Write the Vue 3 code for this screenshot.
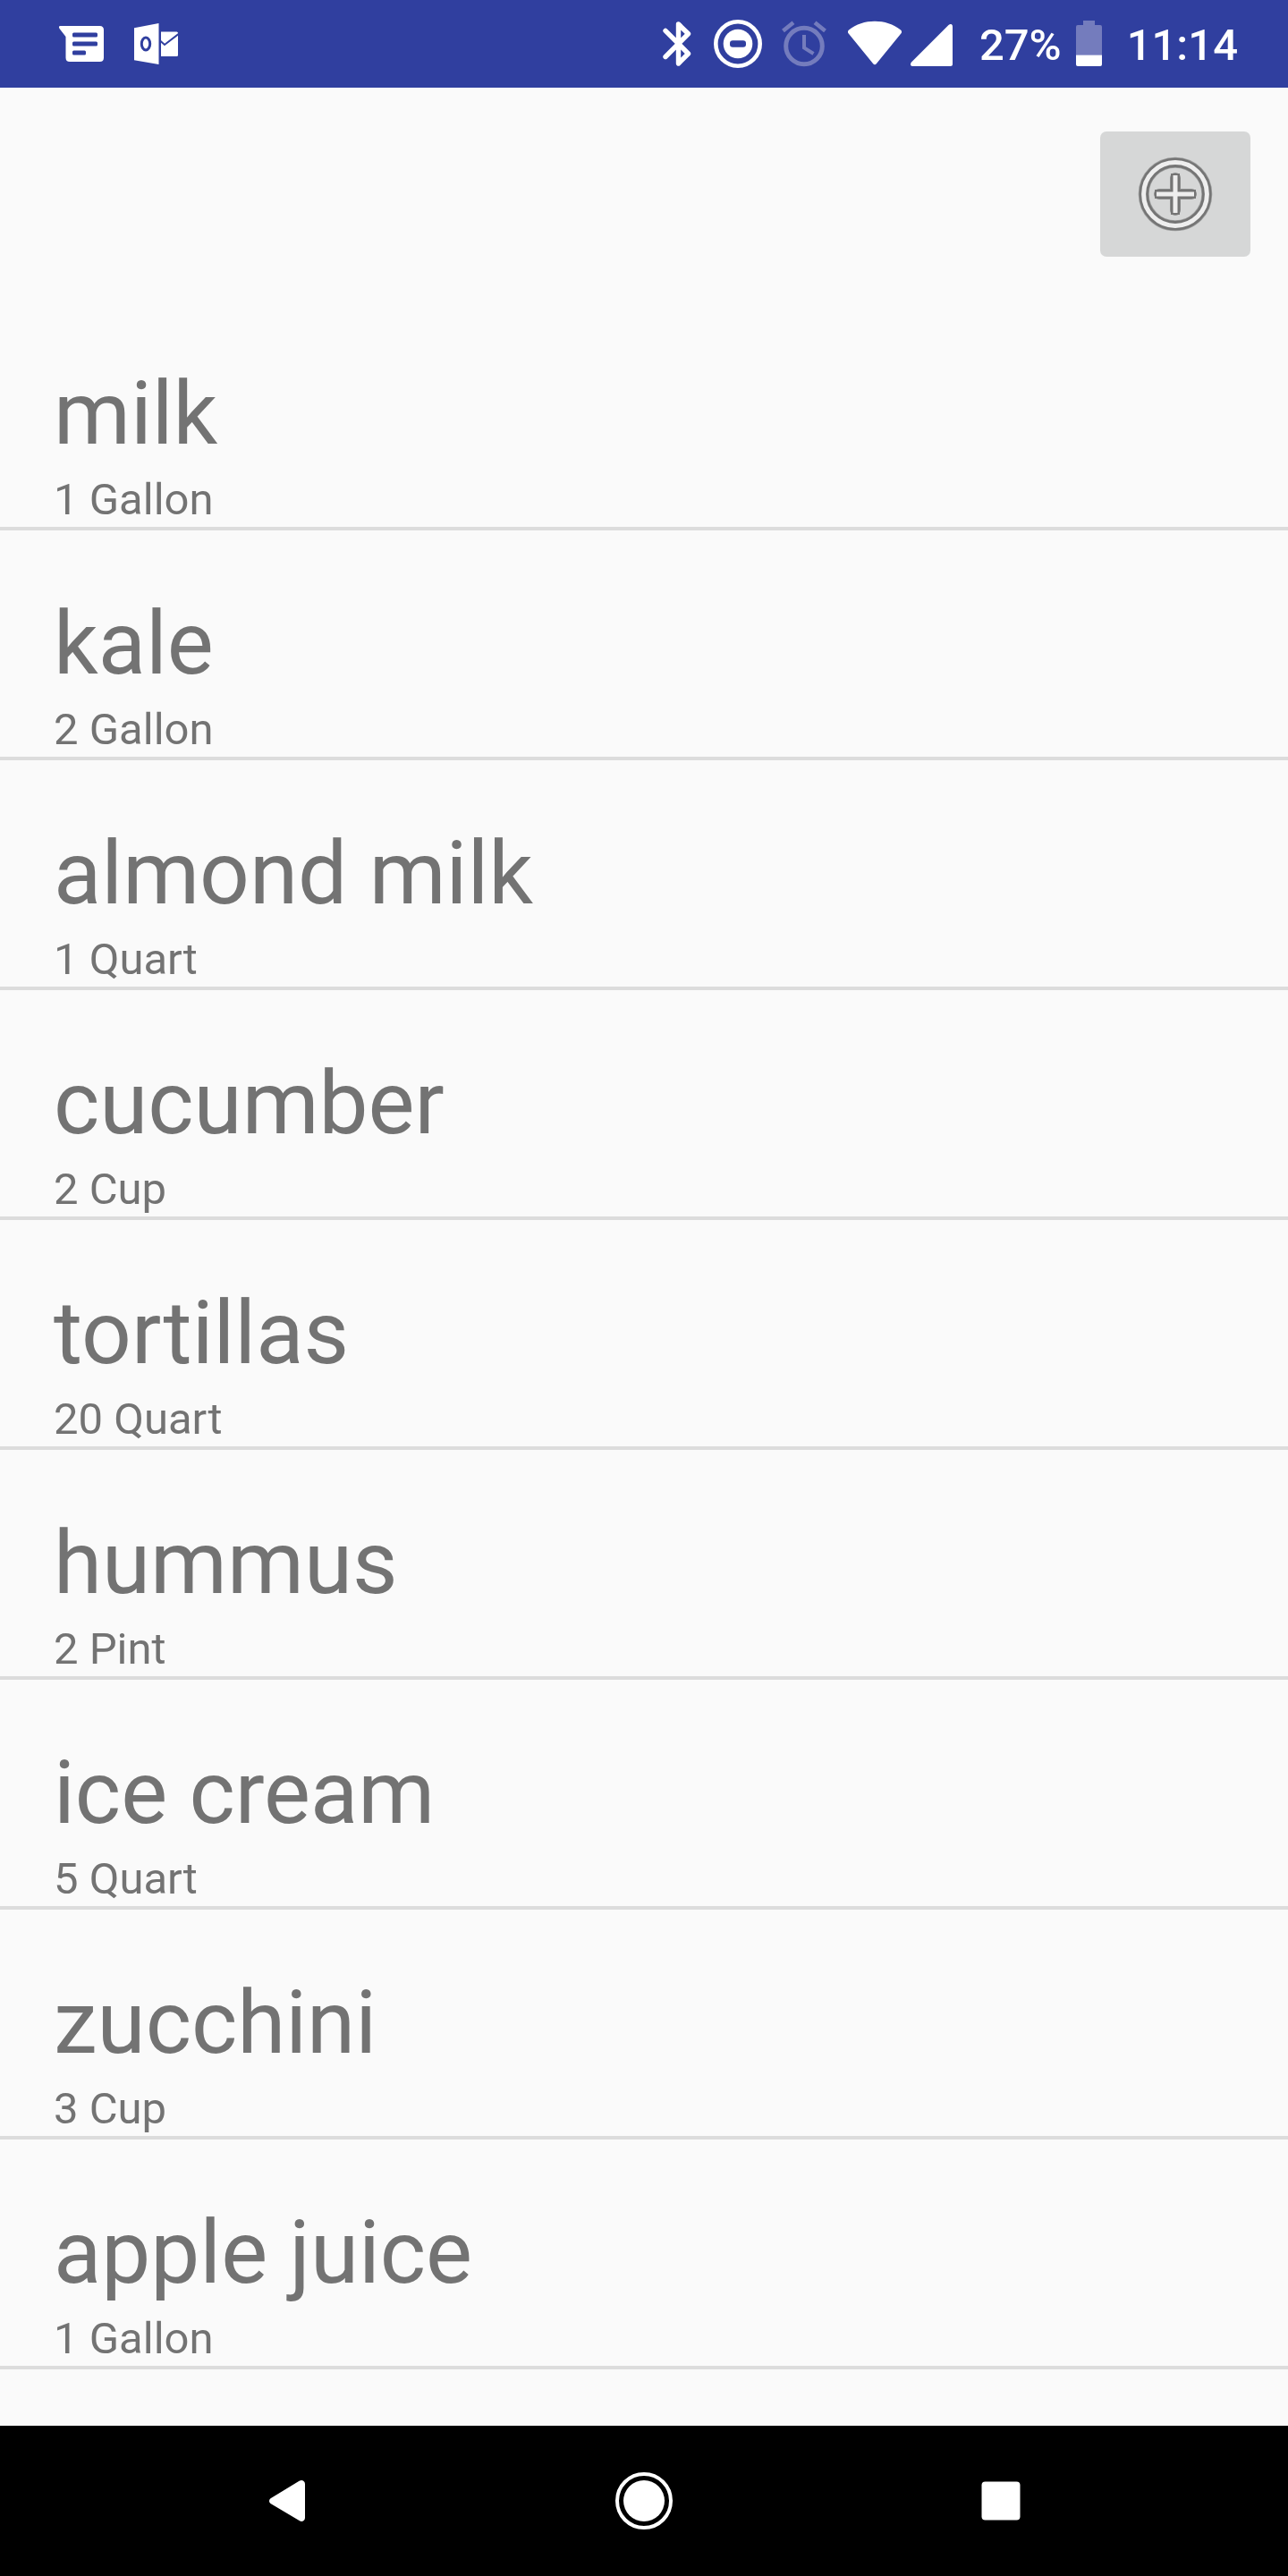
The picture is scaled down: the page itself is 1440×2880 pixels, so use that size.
<script setup>
import { ref } from 'vue'

const items = ref([
  { name: 'milk', amount: '1 Gallon' },
  { name: 'kale', amount: '2 Gallon' },
  { name: 'almond milk', amount: '1 Quart' },
  { name: 'cucumber', amount: '2 Cup' },
  { name: 'tortillas', amount: '20 Quart' },
  { name: 'hummus', amount: '2 Pint' },
  { name: 'ice cream', amount: '5 Quart' },
  { name: 'zucchini', amount: '3 Cup' },
  { name: 'apple juice', amount: '1 Gallon' }
])
</script>

<template>
  <div class="screen">
    <header class="status-bar">
      <div class="notifications">
        <!-- Messages -->
        <svg width="50" height="56" viewBox="0 0 50 56" aria-hidden="true">
          <path fill="#fff" d="M1.500 8H45.500Q50 8 50 12.500V43.500Q50 48 45.500 48H12Q7.500 48 7.500 43.500V20L.5 11Q-1 8 1.500 8Z" />
          <g class="cutout">
            <rect x="15" y="15.500" width="28" height="5" rx="1.500" />
            <rect x="15" y="25.500" width="28" height="5" rx="1.500" />
            <rect x="15" y="35.500" width="15" height="5" rx="1.500" />
          </g>
        </svg>
        <!-- Outlook -->
        <svg width="50" height="56" viewBox="0 0 50 56" aria-hidden="true">
          <path fill="#fff" d="M0 10.300 27.500 5V51L0 46.200Z" />
          <path fill="#fff" d="M30 14.500H47.500Q49 14.500 49 16V40.500Q49 42 47.500 42H30Z" />
          <path fill="none" stroke="#303f9f" stroke-width="2" d="M29 24.500 34 29 49.500 17" />
          <ellipse cx="13" cy="28" rx="4.700" ry="6.900" fill="none" stroke="#303f9f" stroke-width="3" />
        </svg>
      </div>
      <div class="system">
        <!-- Bluetooth -->
        <svg class="bluetooth" width="32" height="56" viewBox="0 0 32 56" aria-hidden="true">
          <path fill="none" stroke="#fff" stroke-width="5.400" stroke-linecap="round" stroke-linejoin="round" d="M3 13.300 28.500 39 17.500 50V6L28.500 16.800 3 42.500" />
        </svg>
        <!-- Do not disturb -->
        <svg class="dnd" width="54" height="56" viewBox="0 0 54 56" aria-hidden="true">
          <circle cx="27" cy="28" r="24.700" fill="none" stroke="#fff" stroke-width="4.600" />
          <circle cx="27" cy="28" r="16.300" fill="#fff" />
          <rect class="cutout" x="18" y="24.300" width="18" height="7.400" rx="3.200" />
        </svg>
        <!-- Alarm -->
        <svg class="alarm" width="50" height="56" viewBox="0 0 50 56" aria-hidden="true">
          <g class="dim-line">
            <circle cx="25" cy="30.500" r="20.300" stroke-width="5" />
            <path stroke-width="4" d="M25 18V32.500L35.500 39" />
            <path stroke-width="4.600" d="M1.500 13.500 13 4.300M37 4.300 48.500 13.500" />
          </g>
        </svg>
        <!-- Wi-Fi -->
        <svg class="wifi" width="60" height="56" viewBox="0 0 60 56" aria-hidden="true">
          <path fill="#fff" d="M1 12.500C17-.5 43-.5 59 12.500Q61 14.200 59.300 16.500L32 50Q30 52.500 28 50L.7 16.500Q-1 14.200 1 12.500Z" />
        </svg>
        <!-- Cellular -->
        <svg class="signal" width="47" height="56" viewBox="0 0 47 56" aria-hidden="true">
          <path fill="#fff" d="M42.500 7Q44 5.600 45.500 6Q47 6.500 47 8.500V50.500Q47 53 44.500 53H2.500Q.5 53 0 51.500Q-.3 50 1 48.500Z" />
        </svg>
        <span class="battery-level">27%</span>
        <!-- Battery -->
        <svg class="battery" width="29" height="56" viewBox="0 0 29 56" aria-hidden="true">
          <path fill="#747cbd" d="M8 2H21V7H27Q29 7 29 9V40.500H0V9Q0 7 2 7H8Z" />
          <path fill="#fff" d="M0 40.500H29V51Q29 53 27 53H2Q0 53 0 51Z" />
        </svg>
        <time class="clock">11:14</time>
      </div>
    </header>

    <main class="content">
      <div class="toolbar">
        <button class="add" type="button" aria-label="Add item">
          <svg width="84" height="84" viewBox="0 0 84 84" aria-hidden="true">
            <g fill="none">
              <circle cx="42" cy="42" r="35.300" stroke="#9b9c9c" stroke-width="12" />
              <circle cx="42" cy="42" r="35.300" stroke="#757575" stroke-width="10.400" />
              <circle cx="42" cy="42" r="35.400" stroke="#eee" stroke-width="5" />
              <path stroke="#8a8b8b" stroke-width="12" stroke-linecap="round" d="M42 24V60M24 42H60" />
              <path stroke="#757575" stroke-width="10" d="M42 19V65M19 42H65" />
              <path stroke="#eee" stroke-width="5" d="M42 21V63M21 42H63" />
            </g>
          </svg>
        </button>
      </div>
      <ul class="list">
        <li v-for="item in items" :key="item.name" class="item">
          <span class="name">{{ item.name }}</span>
          <span class="amount">{{ item.amount }}</span>
        </li>
      </ul>
    </main>

    <nav class="nav-bar" aria-label="System navigation">
      <button type="button" aria-label="Back">
        <svg width="84" height="84" viewBox="0 0 84 84" aria-hidden="true">
          <path fill="#fff" d="M23.500 39.300 55.500 19.800Q58 18.500 60 19.500Q62 20.500 62 23V61Q62 63.500 60 64.500Q58 65.500 55.500 64L23.500 45Q20.500 42.200 23.500 39.300Z" />
        </svg>
      </button>
      <button type="button" aria-label="Home">
        <svg width="84" height="84" viewBox="0 0 84 84" aria-hidden="true">
          <circle cx="42" cy="42" r="30" fill="none" stroke="#fff" stroke-width="4" />
          <circle cx="42" cy="42" r="23" fill="#fff" />
        </svg>
      </button>
      <button type="button" aria-label="Recent apps">
        <svg width="84" height="84" viewBox="0 0 84 84" aria-hidden="true">
          <rect x="20.500" y="20.500" width="43" height="43" rx="4" fill="#fff" />
        </svg>
      </button>
    </nav>
  </div>
</template>

<style>
body {
  margin: 0;
  background: #fafafa;
}
</style>

<style scoped>
.screen {
  display: flex;
  flex-direction: column;
  min-height: 100vh;
  background: #fafafa;
  color: #737373;
  font-family: Roboto, sans-serif;
}

svg {
  display: block;
  flex: none;
}

button {
  display: flex;
  align-items: center;
  justify-content: center;
  padding: 0;
  border: 0;
  cursor: pointer;
}

.status-bar {
  display: flex;
  align-items: center;
  justify-content: space-between;
  height: 98px;
  padding: 0 56px 0 66px;
  background: #303f9f;
  color: #fff;
  font-size: 49px;
  font-weight: 500;
  line-height: 58px;
}

.notifications {
  display: flex;
  gap: 34px;
}

.system {
  display: flex;
  align-items: center;
}

.cutout {
  fill: #303f9f;
}

.dim-line {
  fill: none;
  stroke: #747cbd;
}

.dnd {
  margin-left: 25px;
}

.alarm {
  margin-left: 22px;
}

.wifi {
  margin-left: 24px;
}

.signal {
  margin-left: 10px;
}

.battery-level,
.clock {
  padding-top: 4px;
}

.battery-level {
  margin-left: 30px;
}

.battery {
  margin-left: 16px;
}

.clock {
  margin-left: 28px;
}

.content {
  flex: 1;
}

.toolbar {
  display: flex;
  justify-content: flex-end;
  padding: 49px 42px;
}

.add {
  width: 168px;
  height: 140px;
  border-radius: 7px;
  background: #d6d7d7;
}

.list {
  margin: 0;
  padding: 0;
  list-style: none;
}

.item {
  display: flex;
  flex-direction: column;
  gap: 2px;
  padding: 63px 60px 0;
  border-bottom: 4px solid #dcdcdc;
}

.name {
  font-size: 98px;
  line-height: 128px;
}

.amount {
  font-size: 49px;
  line-height: 60px;
}

.nav-bar {
  display: grid;
  grid-template-columns: repeat(3, 1fr);
  height: 168px;
  padding: 0 122px;
  background: #000;
}

.nav-bar button {
  background: transparent;
}
</style>
